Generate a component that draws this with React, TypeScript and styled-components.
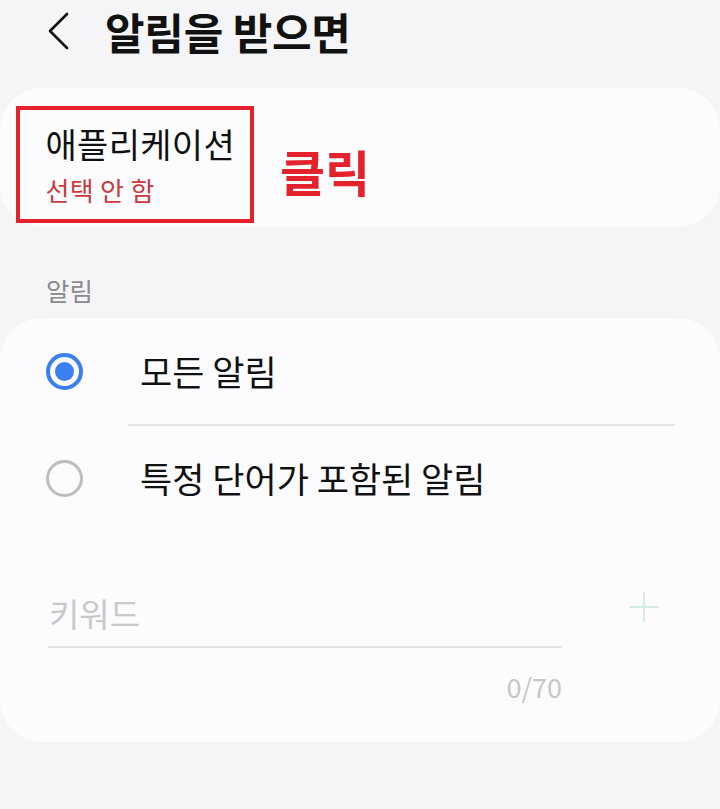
import React from "react";
import styled, { createGlobalStyle } from "styled-components";

const Global = createGlobalStyle`
  html, body { margin: 0; padding: 0; background: #f5f5f7; }
  body { font-family: "Noto Sans CJK KR", "Noto Sans", sans-serif; color: #111; }
  * { box-sizing: border-box; }
`;

const Page = styled.div`
  width: 720px;
  min-height: 809px;
  background: #f5f5f7;
  display: flex;
  flex-direction: column;
`;

const Header = styled.header`
  height: 62px;
  display: flex;
  align-items: center;
  padding-left: 47px;
  gap: 36px;
`;

const BackIcon = styled.svg`
  width: 22px;
  height: 38px;
  flex: none;
`;

const Title = styled.h1`
  margin: 0;
  font-size: 43px;
  line-height: 1;
  font-weight: 700;
  letter-spacing: -0.2px;
  color: #111;
`;

const Card = styled.section<{ $mt: number }>`
  margin-top: ${(p) => p.$mt}px;
  background: #fcfcfe;
  border-radius: 42px;
`;

const AppCard = styled(Card)`
  height: 139px;
  padding: 18px 0 0 16px;
  display: flex;
  align-items: flex-start;
  gap: 26px;
`;

const HighlightBox = styled.div`
  width: 238px;
  height: 117px;
  border: 4.5px solid #e3222b;
  padding: 14px 0 0 25.5px;
  display: flex;
  flex-direction: column;
  gap: 11px;
`;

const AppTitle = styled.div`
  font-size: 34px;
  line-height: 40px;
  letter-spacing: 0.3px;
  color: #111;
`;

const AppValue = styled.div`
  font-size: 26px;
  line-height: 30px;
  letter-spacing: 0.3px;
  color: #c83a3e;
`;

const ClickNote = styled.div`
  margin-top: 39px;
  font-size: 49px;
  line-height: 52px;
  font-weight: 700;
  color: #e3222b;
`;

const SectionLabel = styled.div`
  margin: 48px 0 0 46px;
  font-size: 25.5px;
  line-height: 30px;
  color: #8a8a8c;
`;

const OptionsCard = styled(Card)`
  height: 424px;
  display: flex;
  flex-direction: column;
`;

const OptionRow = styled.div<{ $h: number }>`
  height: ${(p) => p.$h}px;
  display: flex;
  align-items: center;
  padding-left: 46px;
  gap: 57px;
`;

const Radio = styled.span<{ $checked?: boolean }>`
  width: 37px;
  height: 37px;
  border-radius: 50%;
  flex: none;
  border: ${(p) => (p.$checked ? "4px solid #3b7ff0" : "3px solid #bdbdbd")};
  display: flex;
  align-items: center;
  justify-content: center;
  &::after {
    content: "";
    width: 19px;
    height: 19px;
    border-radius: 50%;
    background: ${(p) => (p.$checked ? "#3b7ff0" : "transparent")};
  }
`;

const OptionText = styled.span`
  font-size: 35px;
  line-height: 42px;
  color: #111;
`;

const Divider = styled.div`
  height: 2px;
  margin: 0 45px 0 128px;
  background: #e4e4e6;
`;

const KeywordRow = styled.div`
  margin-top: 57px;
  display: flex;
  align-items: center;
  padding-left: 48px;
  gap: 66px;
`;

const KeywordField = styled.div`
  width: 514px;
  height: 61px;
  border-bottom: 2px solid #e3e3e5;
  display: flex;
  align-items: center;
  padding: 0 0 8px 1px;
  font-size: 33px;
  line-height: 40px;
  color: #c9c9cb;
`;

const PlusIcon = styled.svg`
  width: 32px;
  height: 32px;
  margin-bottom: 22px;
  flex: none;
`;

const Counter = styled.div`
  margin-top: 24px;
  width: 562px;
  text-align: right;
  font-size: 27px;
  line-height: 30px;
  color: #c6c6c8;
`;

export default function App() {
  return (
    <Page>
      <Global />
      <Header>
        <BackIcon viewBox="0 0 22 38" fill="none">
          <polyline points="20,2 3,19 20,36" stroke="#111" strokeWidth="2.6" strokeLinecap="round" strokeLinejoin="round" />
        </BackIcon>
        <Title>알림을 받으면</Title>
      </Header>

      <AppCard $mt={26}>
        <HighlightBox>
          <AppTitle>애플리케이션</AppTitle>
          <AppValue>선택 안 함</AppValue>
        </HighlightBox>
        <ClickNote>클릭</ClickNote>
      </AppCard>

      <SectionLabel>알림</SectionLabel>

      <OptionsCard $mt={13}>
        <OptionRow $h={106}>
          <Radio $checked />
          <OptionText>모든 알림</OptionText>
        </OptionRow>
        <Divider />
        <OptionRow $h={104}>
          <Radio />
          <OptionText>특정 단어가 포함된 알림</OptionText>
        </OptionRow>
        <KeywordRow>
          <KeywordField>키워드</KeywordField>
          <PlusIcon viewBox="0 0 32 32" fill="none">
            <line x1="16" y1="1" x2="16" y2="31" stroke="#d3ebe4" strokeWidth="2" />
            <line x1="1" y1="16" x2="31" y2="16" stroke="#d3ebe4" strokeWidth="2" />
          </PlusIcon>
        </KeywordRow>
        <Counter>0/70</Counter>
      </OptionsCard>
    </Page>
  );
}
